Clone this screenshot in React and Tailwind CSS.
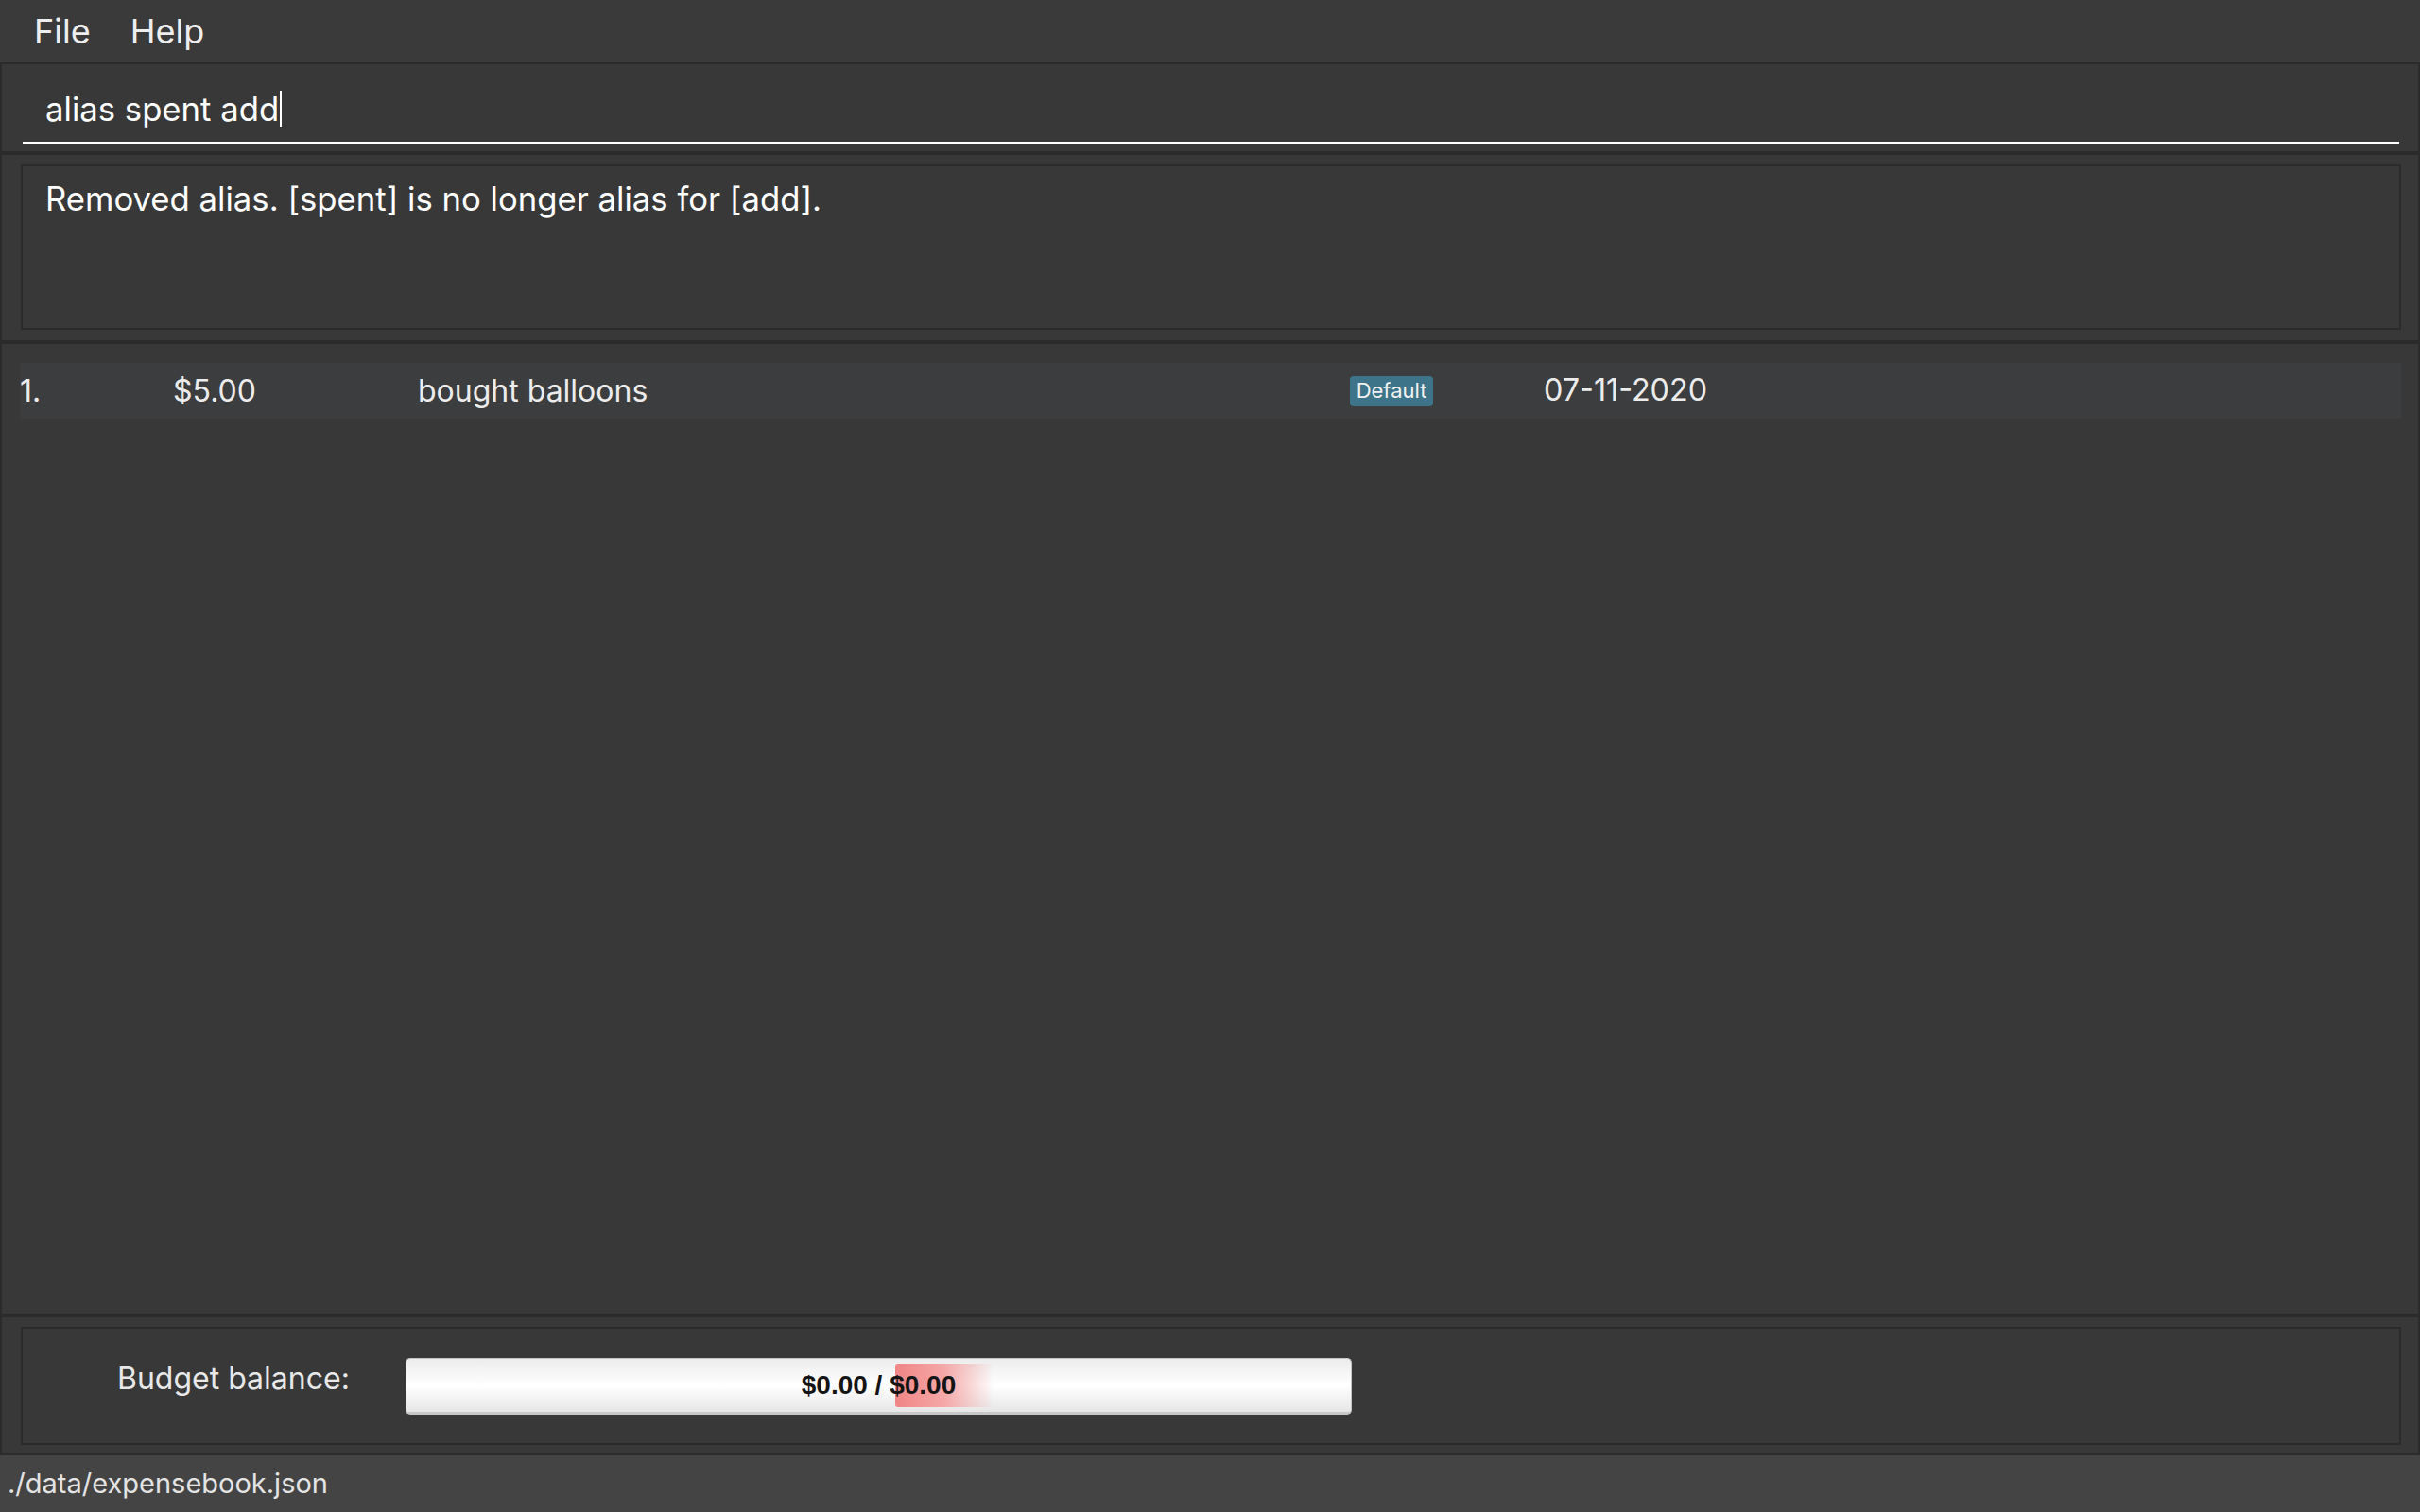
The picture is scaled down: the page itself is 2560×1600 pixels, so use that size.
import React from "react";

const font = { fontFamily: "Inter, 'Noto Sans', sans-serif" };

const expenses = [
  { index: "1.", amount: "$5.00", description: "bought balloons", tag: "Default", date: "07-11-2020" },
];

const MenuBar = () => (
  <div className="h-[66px] shrink-0 bg-[#3a3a3a] flex items-center pl-[36px] gap-[42px] text-[36px] text-[#eeeeee]">
    <span>File</span>
    <span>Help</span>
  </div>
);

const CommandBox = () => (
  <div className="h-[96px] shrink-0 bg-[#383838] border-2 border-[#2b2b2b] pl-[22px] pr-[20px] pt-[12px]">
    <div className="h-[72px] border-b-2 border-white flex items-center pl-[24px] text-[34.7px] text-white">
      <span>alias spent add</span>
      <span className="w-[2px] h-[38px] bg-white ml-[1px]" />
    </div>
  </div>
);

const ResultDisplay = () => (
  <div className="h-[200px] shrink-0 bg-[#383838] border-2 border-[#2b2b2b] pt-[10px] pb-[11px] pl-[20px] pr-[18px]">
    <div className="h-full border-2 border-[#2b2b2b] px-[24px] pt-[8px] text-[34.7px] text-white">
      Removed alias. [spent] is no longer alias for [add].
    </div>
  </div>
);

const ExpenseRow = ({ expense }) => (
  <div className="h-[59px] bg-[#3c3d3f] flex items-center text-[32px] text-[#ececec]">
    <span className="w-[162px]">{expense.index}</span>
    <span className="w-[259px]">{expense.amount}</span>
    <span className="w-[986px]">{expense.description}</span>
    <span className="w-[88px] h-[32px] rounded-[4px] bg-[#3e7489] text-[22px] text-[#f2f2f2] flex items-center justify-center">
      {expense.tag}
    </span>
    <span className="ml-[117px] text-[32.3px]">{expense.date}</span>
  </div>
);

const ExpenseList = () => (
  <div className="flex-1 bg-[#383838] border-2 border-[#2b2b2b] pt-[20px] pl-[19px] pr-[18px]">
    {expenses.map((e, i) => (
      <ExpenseRow key={i} expense={e} />
    ))}
  </div>
);

const BudgetBar = () => (
  <div className="relative w-[1001px] h-[60px] rounded-[5px] border border-[#c4c4c4] border-b-[3px] border-b-[#c8c8c8] bg-gradient-to-b from-[#ececec] via-white to-[#e6e6e6]">
    <div className="absolute left-[517px] top-[5px] w-[104px] h-[46px] rounded-l-[3px] bg-gradient-to-r from-[#f08585] via-[#f5a8a8] to-transparent" />
    <div
      className="absolute inset-0 flex items-center justify-center text-[28px] font-bold text-[#141414]"
      style={{ fontFamily: "'Liberation Sans', Arial, sans-serif" }}
    >
      $0.00 / $0.00
    </div>
  </div>
);

const BudgetPanel = () => (
  <div className="h-[148px] shrink-0 bg-[#383838] border-2 border-[#2b2b2b] pt-[10px] pb-[9px] pl-[20px] pr-[18px]">
    <div className="h-full border-2 border-[#2b2b2b] flex items-center pl-[100px]">
      <span className="w-[305px] text-[32px] text-[#e8e8e8] -mt-[16px]">Budget balance:</span>
      <BudgetBar />
    </div>
  </div>
);

const StatusBar = () => (
  <div className="h-[60px] shrink-0 bg-[#444444] flex items-center pl-[8px] text-[29px] text-[#e4e4e4]">
    ./data/expensebook.json
  </div>
);

export default function App() {
  return (
    <div className="w-[2560px] h-[1600px] flex flex-col bg-[#383838] overflow-hidden" style={font}>
      <MenuBar />
      <CommandBox />
      <ResultDisplay />
      <ExpenseList />
      <BudgetPanel />
      <StatusBar />
    </div>
  );
}
